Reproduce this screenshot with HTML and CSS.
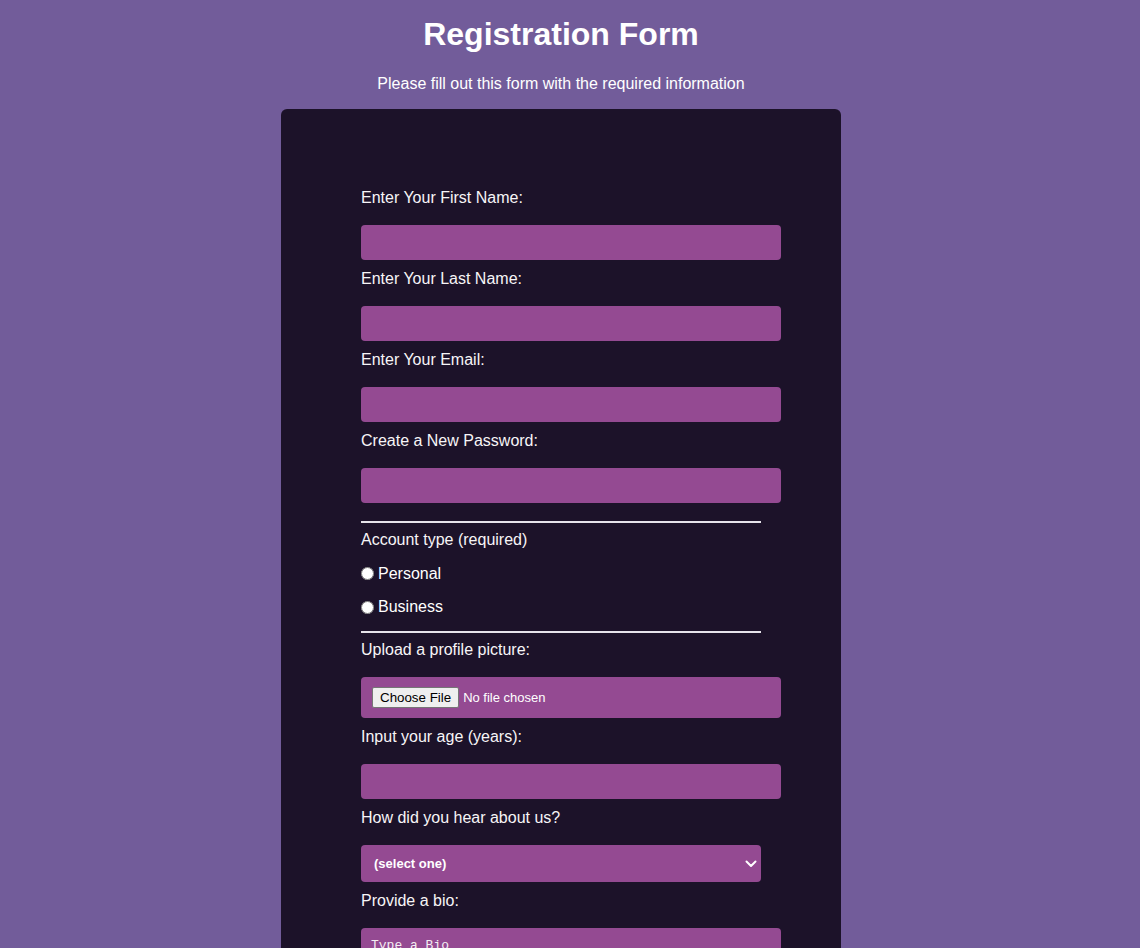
FILE: index.html
```html
<!DOCTYPE html>
<html lang="en">
<head>
<meta charset="utf-8">
<title>Registration Form</title>
<link rel="stylesheet" href="styles.css">
</head>
<body>
  <h1 class="title">Registration Form</h1>
  <p class="subtitle">Please fill out this form with the required information</p>
  <form class="card">
    <div class="field">
      <label class="label" for="first-name">Enter Your First Name:</label>
      <input class="control" id="first-name" type="text">
    </div>
    <div class="field">
      <label class="label" for="last-name">Enter Your Last Name:</label>
      <input class="control" id="last-name" type="text">
    </div>
    <div class="field">
      <label class="label" for="email">Enter Your Email:</label>
      <input class="control" id="email" type="email">
    </div>
    <div class="field">
      <label class="label" for="password">Create a New Password:</label>
      <input class="control" id="password" type="password">
    </div>
    <hr class="rule">
    <div class="group">
      <div class="label">Account type (required)</div>
      <label class="radio-row"><input class="radio" type="radio" name="account">Personal</label>
      <label class="radio-row"><input class="radio" type="radio" name="account">Business</label>
    </div>
    <hr class="rule">
    <div class="field">
      <label class="label" for="picture">Upload a profile picture:</label>
      <input class="file" id="picture" type="file">
    </div>
    <div class="field">
      <label class="label" for="age">Input your age (years):</label>
      <input class="control" id="age" type="number">
    </div>
    <div class="field">
      <label class="label" for="referrer">How did you hear about us?</label>
      <div class="select-wrap">
        <select class="select" id="referrer">
          <option>(select one)</option>
          <option>freeCodeCamp News</option>
          <option>freeCodeCamp YouTube Channel</option>
          <option>freeCodeCamp Forum</option>
          <option>Other</option>
        </select>
        <svg class="chevron" width="12" height="8" viewBox="0 0 12 8"><path d="M1.5 1.5 L6 6 L10.5 1.5" fill="none" stroke="#fff" stroke-width="2" stroke-linecap="round" stroke-linejoin="round"/></svg>
      </div>
    </div>
    <div class="field">
      <label class="label" for="bio">Provide a bio:</label>
      <textarea class="bio" id="bio" placeholder="Type a Bio"></textarea>
    </div>
  </form>
</body>
</html>
```

FILE: styles.css
```css
html, body {
  margin: 0;
  padding: 0;
}

body {
  background: #725c9a;
  color: #ffffff;
  font-family: "Liberation Sans", Arial, sans-serif;
  font-size: 16px;
  padding: 0 18px 40px 0;
}

.title {
  margin: 16px 0 22px;
  text-align: center;
  font-size: 32px;
  line-height: 37px;
  font-weight: bold;
}

.subtitle {
  margin: 0 0 16px;
  text-align: center;
  font-size: 16px;
  line-height: 18px;
}

.card {
  width: 400px;
  margin: 0 auto;
  padding: 80px 80px 60px;
  background: #1c1229;
  border-radius: 6px;
  display: flex;
  flex-direction: column;
}

.label {
  display: block;
  line-height: 18px;
  color: #f7f5f7;
}

.field {
  display: flex;
  flex-direction: column;
  align-items: flex-start;
  margin-bottom: 10px;
}

.control {
  box-sizing: border-box;
  width: 420px;
  height: 35px;
  margin: 18px 0 0;
  padding: 0 10px;
  border: none;
  border-radius: 4px;
  background: #944a92;
  color: #ffffff;
  font-family: "Liberation Sans", Arial, sans-serif;
  font-size: 16px;
}

.rule {
  width: 400px;
  margin: 8px 0 8px;
  border: none;
  border-top: 2px solid #e6e3ea;
  height: 0;
}

.group {
  display: flex;
  flex-direction: column;
  gap: 15.5px;
  padding-bottom: 7px;
}

.radio-row {
  display: flex;
  align-items: center;
  line-height: 18px;
  color: #ffffff;
}

.radio {
  margin: 0 4px 0 0;
  width: 13px;
  height: 13px;
}

.file {
  box-sizing: border-box;
  width: 420px;
  height: 41px;
  margin: 18px 0 0;
  padding: 10px 10px;
  border-radius: 4px;
  background: #944a92;
  color: #ffffff;
  font-family: "Liberation Sans", Arial, sans-serif;
  font-size: 13px;
}

.file::file-selector-button {
  font-family: "Liberation Sans", Arial, sans-serif;
  font-size: 13.33px;
  background: #efefef;
  color: #000;
  border: 1px solid #767676;
  border-radius: 2px;
  padding: 2px 7px;
  margin: 0 4px 0 1px;
}

.select-wrap {
  position: relative;
  margin-top: 18px;
  width: 400px;
  height: 37px;
}

.select {
  appearance: none;
  -webkit-appearance: none;
  box-sizing: border-box;
  width: 400px;
  height: 37px;
  padding: 0 10px 0 13px;
  border: none;
  border-radius: 4px;
  background: #944a92;
  color: #ffffff;
  font-family: "Liberation Sans", Arial, sans-serif;
  font-size: 13px;
  font-weight: bold;
}

.chevron {
  position: absolute;
  right: 4px;
  top: 15px;
}

.bio {
  box-sizing: border-box;
  width: 420px;
  height: 120px;
  margin: 18px 0 0;
  padding: 10px;
  border: none;
  border-radius: 4px;
  background: #944a92;
  color: #ffffff;
  font-family: "Liberation Mono", "DejaVu Sans Mono", monospace;
  font-size: 13px;
  resize: vertical;
}

.bio::placeholder {
  color: #f3eef3;
  opacity: 1;
}
```
